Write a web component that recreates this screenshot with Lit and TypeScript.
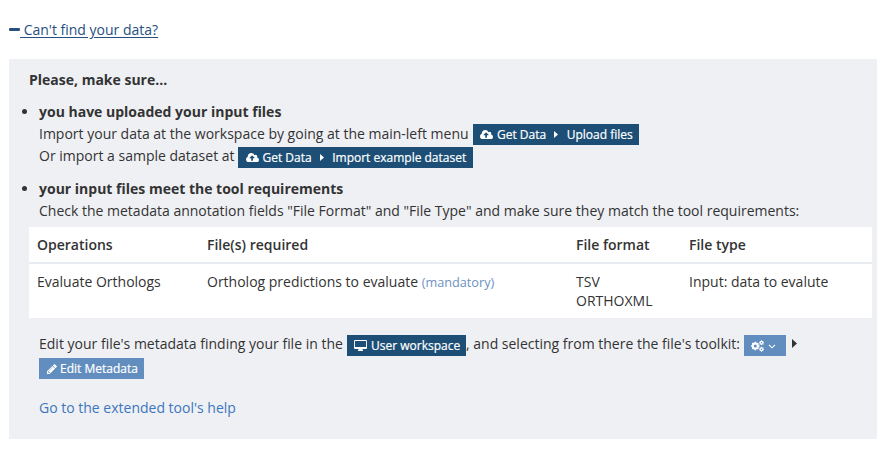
import { LitElement, html, css, svg } from "lit";
import { customElement } from "lit/decorators.js";

const cloud = html`<svg class="cloud" viewBox="0 0 1920 1408"><path d="M1280 736q0-14-9-23L919 361q-9-9-23-9t-23 9L522 712q-10 12-10 24 0 14 9 23t23 9h224v352q0 13 9.5 22.5T800 1152h192q13 0 22.5-9.5t9.5-22.5V768h224q13 0 22.5-9.5t9.5-22.5zm640 288q0 159-112.5 271.5T1536 1408H448q-185 0-316.5-131.5T0 960q0-130 70-240t188-165q-2-30-2-43 0-212 150-362T768 0q156 0 285.5 87T1242 318q71-62 166-62 106 0 181 75t75 181q0 76-41 138 130 31 213.5 135.5T1920 1024z"/></svg>`;
const pencil = html`<svg class="pencil" viewBox="128 128 1536 1536"><path d="M491 1536l91-91-235-235-91 91v107h128v128h107zm523-928q0-22-22-22-10 0-17 7l-542 542q-7 7-7 17 0 22 22 22 10 0 17-7l542-542q7-7 7-17zm-54-192l416 416-832 832h-416v-416zm683 96q0 53-37 90l-166 166-416-416 166-165q36-38 90-38 53 0 91 38l235 234q37 39 37 91z"/></svg>`;
const desktop = html`<svg class="desktop" viewBox="0 0 13 11"><path fill-rule="evenodd" d="M1 0h11a1 1 0 0 1 1 1v7a1 1 0 0 1-1 1H8.3q0 .6.5 1 .3.2.3.5 0 .5-.5.5H4.4q-.5 0-.5-.5 0-.3.3-.5.5-.4.5-1H1a1 1 0 0 1-1-1V1a1 1 0 0 1 1-1zM.9.9v6.1h11.2V.9z"/></svg>`;
const gear = (x: number, y: number, r: number, hole: number, tooth: number) => svg`
  <circle cx=${x} cy=${y} r=${(r + hole) / 2} fill="none" stroke="#fff" stroke-width=${r - hole}></circle>
  ${[0, 45, 90, 135].map((a) => svg`<path fill="none" stroke="#fff" stroke-width=${tooth} transform="rotate(${a} ${x} ${y})" d="M${x - r - tooth / 2} ${y}h${tooth}M${x + r - tooth / 2} ${y}h${tooth}"></path>`)}`;
const cogs = html`<svg class="cogs" viewBox="0 0 13 12">${gear(4.3, 6, 3.5, 1.5, 1.6)}${gear(10.5, 2.7, 2, 0.8, 0.9)}${gear(10.5, 9.3, 2, 0.8, 0.9)}</svg>`;
const chevron = html`<svg class="chevron" viewBox="0 0 8 5"><path d="M1 .8l3 3 3-3" fill="none" stroke="#fff" stroke-width="1.1"/></svg>`;
const caret = html`<svg class="caret" viewBox="0 0 4 8" preserveAspectRatio="none"><path d="M0 0l4 4-4 4z"/></svg>`;

@customElement("app-root")
export class AppRoot extends LitElement {
  static styles = css`
    :host { display: block; height: 449px; overflow: hidden; background: #fff; color: #333; font: 14px/22px "Open Sans", sans-serif; }
    svg { display: block; flex: none; fill: currentColor; }
    .toggle { display: flex; height: 22px; padding: 19px 0 18px 9px; color: #27507f; }
    .minus { width: 11px; height: 3px; margin-top: 9px; border-radius: 1px; background: #27507f; }
    .toggle u { white-space: pre; text-underline-offset: 2px; }
    .panel { box-sizing: border-box; width: 868px; height: 380px; margin-left: 9px; padding: 10px 5px 0 20px; background: #eff0f4; }
    .title { font-weight: 700; }
    ul { list-style: none; margin: 10px 0 0; padding: 0; }
    li { display: flex; height: 66px; margin-bottom: 11px; }
    li + li { height: 49px; margin-bottom: 0; }
    .bullet { width: 5px; height: 5px; margin: 8px 12px 0 -7px; border-radius: 50%; background: #333; flex: none; }
    .line { display: flex; height: 22px; white-space: nowrap; }
    .strong { font-weight: 700; }
    .badge { box-sizing: border-box; display: flex; align-items: center; height: 21px; margin-top: 2px; padding-left: 7px; background: #1d4f76; color: #fff; font-size: 12px; font-weight: 500; line-height: 21px; white-space: nowrap; flex: none; -webkit-text-stroke: 0.2px #fff; }
    .light { background: #628dbf; }
    .upload { width: 166px; margin-top: 1px; }
    .sample { width: 235px; }
    .workspace { width: 119px; }
    .toolkit { width: 42px; margin-right: 6px; }
    .edit { width: 105px; margin-top: 3px; }
    .first { width: 434px; } .second { width: 199px; } .third { width: 308px; } .fourth { width: 278px; }
    .cloud { width: 13px; height: 9.5px; margin-right: 4px; }
    .sample .cloud { margin-left: 0.5px; }
    .pencil { width: 10px; height: 10px; margin: 1px 3px 0 1px; }
    .desktop { width: 13px; height: 11px; margin-right: 4px; }
    .cogs { width: 13px; height: 12px; }
    .chevron { width: 8px; height: 5px; margin-left: 4px; margin-top: 2px; }
    .caret { width: 4px; height: 8px; }
    .badge .caret { margin: 0 8.5px 0 8px; height: 7px; }
    .line > .caret { margin-top: 6px; width: 5px; height: 9px; }
    table { width: 843px; border-collapse: separate; border-spacing: 0; table-layout: fixed; background: #fff; line-height: 19px; }
    th, td { text-align: left; vertical-align: top; padding: 8px; }
    th { font-weight: 600; border-bottom: 2px solid #e8ecf0; }
    td { height: 38px; }
    .c1 { width: 154px; } .c2 { width: 353px; } .c3 { width: 97px; }
    .mandatory { font-size: 12.7px; color: #6e92c2; }
    .edit-info { margin: 15px 0 0 10px; }
    .help { margin-top: 20px; color: #3c76bd; }
  `;

  render() {
    return html`
      <div class="toggle"><span class="minus"></span><u> Can't find your data?</u></div>
      <section class="panel">
        <div class="title">Please, make sure...</div>
        <ul>
          <li><span class="bullet"></span><div>
            <div class="line strong">you have uploaded your input files</div>
            <div class="line"><span class="first">Import your data at the workspace by going at the main-left menu</span><span class="badge upload">${cloud}Get Data${caret}Upload files</span></div>
            <div class="line"><span class="second">Or import a sample dataset at</span><span class="badge sample">${cloud}Get Data${caret}Import example dataset</span></div>
          </div></li>
          <li><span class="bullet"></span><div>
            <div class="line strong">your input files meet the tool requirements</div>
            <div class="line">Check the metadata annotation fields "File Format" and "File Type" and make sure they match the tool requirements:</div>
          </div></li>
        </ul>
        <table>
          <tr><th class="c1">Operations</th><th class="c2">File(s) required</th><th class="c3">File format</th><th>File type</th></tr>
          <tr><td>Evaluate Orthologs</td><td>Ortholog predictions to evaluate <span class="mandatory">(mandatory)</span></td><td>TSV<br>ORTHOXML</td><td>Input: data to evalute</td></tr>
        </table>
        <div class="edit-info">
          <div class="line"><span class="third">Edit your file's metadata finding your file in the</span><span class="badge workspace">${desktop}User workspace</span><span class="fourth">, and selecting from there the file's toolkit:</span><span class="badge light toolkit">${cogs}${chevron}</span>${caret}</div>
          <div class="line"><span class="badge light edit">${pencil}Edit Metadata</span></div>
          <div class="line help">Go to the extended tool's help</div>
        </div>
      </section>`;
  }
}
